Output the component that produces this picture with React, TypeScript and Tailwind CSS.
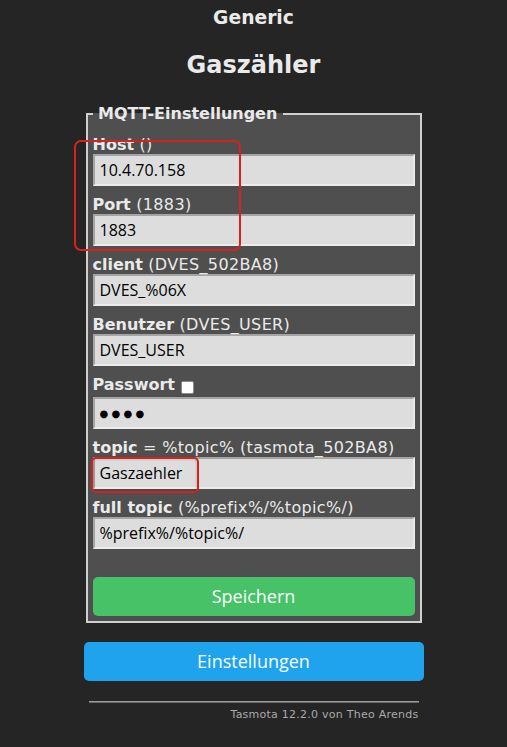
import React from "react";

function Row({
  b,
  rest,
  value,
  checkbox = false,
  dots = false,
}: {
  b: string;
  rest: string;
  value: string;
  checkbox?: boolean;
  dots?: boolean;
}) {
  return (
    <div>
      {checkbox ? (
        <div className="flex h-[22px] items-start text-[16px] leading-[19px]">
          <b className="font-bold">{b}</b>
          <span className="ml-[6px] mt-[6px] box-border inline-block h-[13px] w-[13px] rounded-[2px] border border-[#8f8f8f] bg-white" />
        </div>
      ) : (
        <div className="h-[19px] whitespace-nowrap text-[16px] leading-[19px]">
          <b className="font-bold">{b}</b>
          <span className="tracking-[0.35px]">{rest}</span>
        </div>
      )}
      {dots ? (
        <input
          type="text"
          readOnly
          defaultValue={value}
          className="box-border block h-[32px] w-full border-2 border-b-[#ececec] border-l-[#a4a4a4] border-r-[#ececec] border-t-[#a4a4a4] bg-[#dddddd] px-[5px] py-[5px] font-['DejaVu_Sans',sans-serif] text-[10px] leading-[18px] tracking-[3.3px] text-black outline-none"
        />
      ) : (
        <input
          type="text"
          readOnly
          defaultValue={value}
          className="box-border block h-[32px] w-full border-2 border-b-[#ececec] border-l-[#a4a4a4] border-r-[#ececec] border-t-[#a4a4a4] bg-[#dddddd] px-[5px] py-[5px] font-['Open_Sans',sans-serif] text-[16px] leading-[18px] text-black outline-none"
        />
      )}
    </div>
  );
}

export default function App() {
  return (
    <div className="relative min-h-[747px] w-full bg-[#252525] font-['DejaVu_Sans',Verdana,sans-serif]">
      <div className="flex justify-center">
        <div className="w-[340px] text-[#eaeaea]">
          <div className="pt-[7px] text-center">
            <h3 className="text-[18.72px] font-bold leading-[22px]">Generic</h3>
            <h2 className="mt-[22px] text-[24px] font-bold leading-[28px]">Gaszähler</h2>
          </div>

          <fieldset className="mx-[2px] mt-[25px] border-2 border-[#cfcfcf] bg-[#4f4f4f] px-[5px] pb-[5px] pt-0">
            <legend className="px-0 text-[16px] font-bold leading-[19px]">
              {"\u00a0MQTT-Einstellungen\u00a0"}
            </legend>
            <div className="mt-[12px] flex flex-col gap-[9px]">
              <Row b="Host" rest=" ()" value="10.4.70.158" />
              <Row b="Port" rest=" (1883)" value="1883" />
              <Row b="client" rest=" (DVES_502BA8)" value="DVES_%06X" />
              <Row b="Benutzer" rest=" (DVES_USER)" value="DVES_USER" />
              <Row b="Passwort" rest="" value="●●●●" checkbox dots />
              <Row b="topic" rest=" = %topic% (tasmota_502BA8)" value="Gaszaehler" />
              <Row b="full topic" rest=" (%prefix%/%topic%/)" value="%prefix%/%topic%/" />
            </div>
            <button className="mt-[28px] block h-[39px] w-full rounded-[5px] bg-[#47c266] font-['Open_Sans',sans-serif] text-[18px] leading-[39px] text-[#faffff]">
              Speichern
            </button>
          </fieldset>

          <button className="mt-[19px] block h-[39px] w-full rounded-[5px] bg-[#1fa3ec] font-['Open_Sans',sans-serif] text-[18px] leading-[39px] text-[#faffff]">
            Einstellungen
          </button>

          <div className="mt-[20px] px-[5px] text-right text-[11px]">
            <div className="h-[2px] border-b border-t border-b-[#6a6a6a] border-t-[#9a9a9a]" />
            <div className="mt-[5px] leading-[13px] tracking-[0.25px] text-[#aaaaaa]">Tasmota 12.2.0 von Theo Arends</div>
          </div>
        </div>
      </div>

      <div className="pointer-events-none absolute left-[74px] top-[140px] h-[111px] w-[167px] rounded-[7px] border-2 border-[#d8201f]" />
      <div className="pointer-events-none absolute left-[91px] top-[457px] h-[36px] w-[108px] rounded-[5px] border-2 border-[#d8201f] shadow-[inset_0_0_3px_rgba(0,0,0,0.25)]" />
    </div>
  );
}
